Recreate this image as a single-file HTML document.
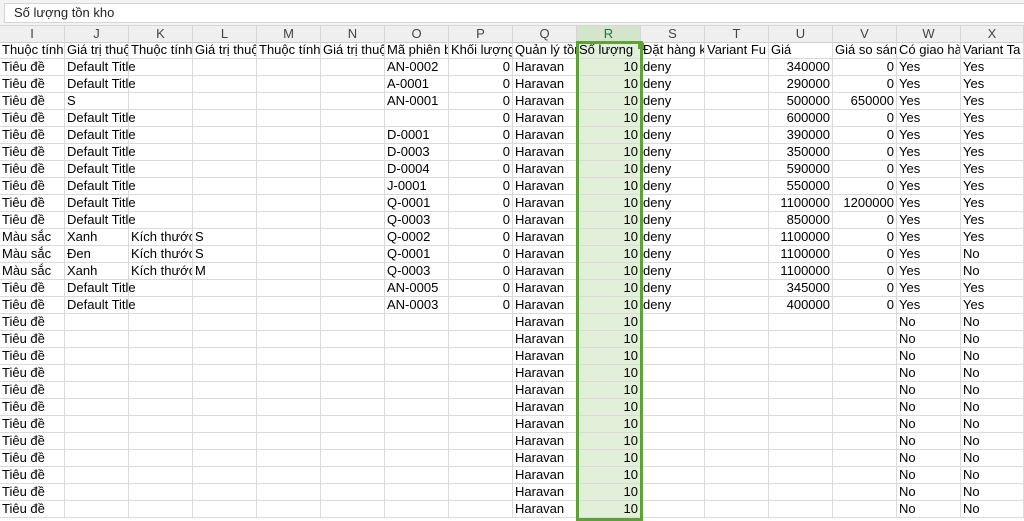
<!DOCTYPE html>
<html><head><meta charset="utf-8">
<style>
*{box-sizing:border-box;margin:0;padding:0}
body{width:1024px;height:519px;overflow:hidden;background:#fff;font-family:"Liberation Sans",Arial,sans-serif;position:relative}
#fb{position:absolute;left:0;top:0;width:1024px;height:26px;background:#f3f3f3;border-bottom:1px solid #d6d6d6}
#fbox{position:absolute;left:4px;top:3px;width:1024px;height:20px;background:#fff;border:1px solid #d6d6d6;font-size:13px;line-height:18px;padding-left:9px;color:#222}
#hd{position:absolute;left:0;top:26px;display:grid;grid-template-columns:65px repeat(14,64px) 63px;height:16px;width:1024px}
#hd p{background:#efefef;border-right:1px solid #d5d5d5;border-bottom:1px solid #cfcfcf;text-align:center;font-size:13px;line-height:15px;color:#444}
#hd p.sel{background:#d3e6cc;color:#217346;border-bottom:2px solid #5ea03a}
#g{position:absolute;left:0;top:42px;display:grid;grid-template-columns:65px repeat(14,64px) 63px;grid-auto-rows:17px;width:1024px}
#g p{border-right:1px solid #dadada;border-bottom:1px solid #dadada;font-size:13px;line-height:16px;white-space:nowrap;overflow:hidden;padding:0 2px;color:#000}
#g p.n{text-align:right}
#g p.v{overflow:visible}
#g p:nth-child(16n+10){background:#e2f0d9}
#selb{position:absolute;left:576px;top:41px;width:67px;height:480px;border:3px solid #5ea03a}
#fh{position:absolute;left:638px;top:43px;width:6px;height:6px;background:#5ea03a}
</style></head><body>
<div id="fb"><div id="fbox">Số lượng tồn kho</div></div>
<div id="hd"><p>I</p><p>J</p><p>K</p><p>L</p><p>M</p><p>N</p><p>O</p><p>P</p><p>Q</p><p class="sel">R</p><p>S</p><p>T</p><p>U</p><p>V</p><p>W</p><p>X</p></div>
<div id="g">
<p>Thuộc tính</p><p>Giá trị thuộc</p><p>Thuộc tính</p><p>Giá trị thuộc</p><p>Thuộc tính</p><p>Giá trị thuộc</p><p>Mã phiên bản</p><p>Khối lượng</p><p>Quản lý tồn</p><p>Số lượng</p><p>Đặt hàng k</p><p>Variant Fu</p><p>Giá</p><p>Giá so sánh</p><p>Có giao hàng</p><p>Variant Ta</p>

<p>Tiêu đề</p><p class="v">Default Title</p><p></p><p></p><p></p><p></p><p>AN-0002</p><p class="n">0</p><p>Haravan</p><p class="n">10</p><p>deny</p><p></p><p class="n">340000</p><p class="n">0</p><p>Yes</p><p>Yes</p>
<p>Tiêu đề</p><p class="v">Default Title</p><p></p><p></p><p></p><p></p><p>A-0001</p><p class="n">0</p><p>Haravan</p><p class="n">10</p><p>deny</p><p></p><p class="n">290000</p><p class="n">0</p><p>Yes</p><p>Yes</p>
<p>Tiêu đề</p><p>S</p><p></p><p></p><p></p><p></p><p>AN-0001</p><p class="n">0</p><p>Haravan</p><p class="n">10</p><p>deny</p><p></p><p class="n">500000</p><p class="n">650000</p><p>Yes</p><p>Yes</p>
<p>Tiêu đề</p><p class="v">Default Title</p><p></p><p></p><p></p><p></p><p></p><p class="n">0</p><p>Haravan</p><p class="n">10</p><p>deny</p><p></p><p class="n">600000</p><p class="n">0</p><p>Yes</p><p>Yes</p>
<p>Tiêu đề</p><p class="v">Default Title</p><p></p><p></p><p></p><p></p><p>D-0001</p><p class="n">0</p><p>Haravan</p><p class="n">10</p><p>deny</p><p></p><p class="n">390000</p><p class="n">0</p><p>Yes</p><p>Yes</p>
<p>Tiêu đề</p><p class="v">Default Title</p><p></p><p></p><p></p><p></p><p>D-0003</p><p class="n">0</p><p>Haravan</p><p class="n">10</p><p>deny</p><p></p><p class="n">350000</p><p class="n">0</p><p>Yes</p><p>Yes</p>
<p>Tiêu đề</p><p class="v">Default Title</p><p></p><p></p><p></p><p></p><p>D-0004</p><p class="n">0</p><p>Haravan</p><p class="n">10</p><p>deny</p><p></p><p class="n">590000</p><p class="n">0</p><p>Yes</p><p>Yes</p>
<p>Tiêu đề</p><p class="v">Default Title</p><p></p><p></p><p></p><p></p><p>J-0001</p><p class="n">0</p><p>Haravan</p><p class="n">10</p><p>deny</p><p></p><p class="n">550000</p><p class="n">0</p><p>Yes</p><p>Yes</p>
<p>Tiêu đề</p><p class="v">Default Title</p><p></p><p></p><p></p><p></p><p>Q-0001</p><p class="n">0</p><p>Haravan</p><p class="n">10</p><p>deny</p><p></p><p class="n">1100000</p><p class="n">1200000</p><p>Yes</p><p>Yes</p>
<p>Tiêu đề</p><p class="v">Default Title</p><p></p><p></p><p></p><p></p><p>Q-0003</p><p class="n">0</p><p>Haravan</p><p class="n">10</p><p>deny</p><p></p><p class="n">850000</p><p class="n">0</p><p>Yes</p><p>Yes</p>
<p>Màu sắc</p><p>Xanh</p><p>Kích thước</p><p>S</p><p></p><p></p><p>Q-0002</p><p class="n">0</p><p>Haravan</p><p class="n">10</p><p>deny</p><p></p><p class="n">1100000</p><p class="n">0</p><p>Yes</p><p>Yes</p>
<p>Màu sắc</p><p>Đen</p><p>Kích thước</p><p>S</p><p></p><p></p><p>Q-0001</p><p class="n">0</p><p>Haravan</p><p class="n">10</p><p>deny</p><p></p><p class="n">1100000</p><p class="n">0</p><p>Yes</p><p>No</p>
<p>Màu sắc</p><p>Xanh</p><p>Kích thước</p><p>M</p><p></p><p></p><p>Q-0003</p><p class="n">0</p><p>Haravan</p><p class="n">10</p><p>deny</p><p></p><p class="n">1100000</p><p class="n">0</p><p>Yes</p><p>No</p>
<p>Tiêu đề</p><p class="v">Default Title</p><p></p><p></p><p></p><p></p><p>AN-0005</p><p class="n">0</p><p>Haravan</p><p class="n">10</p><p>deny</p><p></p><p class="n">345000</p><p class="n">0</p><p>Yes</p><p>Yes</p>
<p>Tiêu đề</p><p class="v">Default Title</p><p></p><p></p><p></p><p></p><p>AN-0003</p><p class="n">0</p><p>Haravan</p><p class="n">10</p><p>deny</p><p></p><p class="n">400000</p><p class="n">0</p><p>Yes</p><p>Yes</p>
<p>Tiêu đề</p><p></p><p></p><p></p><p></p><p></p><p></p><p></p><p>Haravan</p><p class="n">10</p><p></p><p></p><p></p><p></p><p>No</p><p>No</p>
<p>Tiêu đề</p><p></p><p></p><p></p><p></p><p></p><p></p><p></p><p>Haravan</p><p class="n">10</p><p></p><p></p><p></p><p></p><p>No</p><p>No</p>
<p>Tiêu đề</p><p></p><p></p><p></p><p></p><p></p><p></p><p></p><p>Haravan</p><p class="n">10</p><p></p><p></p><p></p><p></p><p>No</p><p>No</p>
<p>Tiêu đề</p><p></p><p></p><p></p><p></p><p></p><p></p><p></p><p>Haravan</p><p class="n">10</p><p></p><p></p><p></p><p></p><p>No</p><p>No</p>
<p>Tiêu đề</p><p></p><p></p><p></p><p></p><p></p><p></p><p></p><p>Haravan</p><p class="n">10</p><p></p><p></p><p></p><p></p><p>No</p><p>No</p>
<p>Tiêu đề</p><p></p><p></p><p></p><p></p><p></p><p></p><p></p><p>Haravan</p><p class="n">10</p><p></p><p></p><p></p><p></p><p>No</p><p>No</p>
<p>Tiêu đề</p><p></p><p></p><p></p><p></p><p></p><p></p><p></p><p>Haravan</p><p class="n">10</p><p></p><p></p><p></p><p></p><p>No</p><p>No</p>
<p>Tiêu đề</p><p></p><p></p><p></p><p></p><p></p><p></p><p></p><p>Haravan</p><p class="n">10</p><p></p><p></p><p></p><p></p><p>No</p><p>No</p>
<p>Tiêu đề</p><p></p><p></p><p></p><p></p><p></p><p></p><p></p><p>Haravan</p><p class="n">10</p><p></p><p></p><p></p><p></p><p>No</p><p>No</p>
<p>Tiêu đề</p><p></p><p></p><p></p><p></p><p></p><p></p><p></p><p>Haravan</p><p class="n">10</p><p></p><p></p><p></p><p></p><p>No</p><p>No</p>
<p>Tiêu đề</p><p></p><p></p><p></p><p></p><p></p><p></p><p></p><p>Haravan</p><p class="n">10</p><p></p><p></p><p></p><p></p><p>No</p><p>No</p>
<p>Tiêu đề</p><p></p><p></p><p></p><p></p><p></p><p></p><p></p><p>Haravan</p><p class="n">10</p><p></p><p></p><p></p><p></p><p>No</p><p>No</p>
</div>
<div id="selb"></div>
<div id="fh"></div>
</body></html>
